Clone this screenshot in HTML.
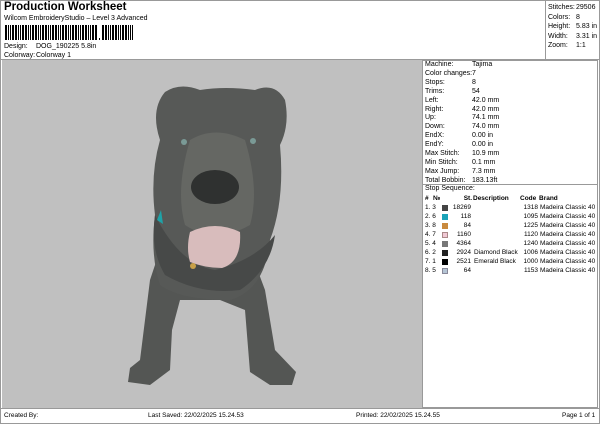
<!DOCTYPE html>
<html><head><style>
*{margin:0;padding:0;box-sizing:border-box}
body{width:600px;height:424px;background:#fff;font-family:"Liberation Sans",sans-serif;font-size:7px;color:#000;position:relative;overflow:hidden}
.a{position:absolute;white-space:nowrap}
.r{position:absolute;left:0;width:176px;height:9px;font-size:6.5px;line-height:9px}
.r span{position:absolute;white-space:nowrap}
.sw{width:6px;height:6px;top:1.5px}
</style></head><body>
<div style="position:absolute;left:0;top:0;width:600px;height:424px;border:1px solid #999"></div>
<div class="a" style="left:4px;top:1px;font-size:11.5px;font-weight:bold">Production Worksheet</div>
<div class="a" style="left:4px;top:15px;font-size:7px">Wilcom EmbroideryStudio – Level 3 Advanced</div>
<div class="a" style="left:5px;top:25px;width:128px;height:15px;background:repeating-linear-gradient(90deg,#000 0 2px,#fff 2px 3px,#000 3px 4px,#fff 4px 5px,#000 5px 6px,#fff 6px 7px,#000 7px 9px,#fff 9px 10px)"></div>
<div class="a" style="left:98px;top:25px;width:4px;height:15px;background:#fff"></div>
<div class="a" style="left:99px;top:38px;width:1px;height:2px;background:#000"></div>
<div class="a" style="left:4px;top:43px">Design:</div><div class="a" style="left:36px;top:43px">DOG_190225 5.8in</div>
<div class="a" style="left:4px;top:52px">Colorway:</div><div class="a" style="left:36px;top:52px">Colorway 1</div>
<div class="a" style="left:545px;top:0;width:1px;height:59px;background:#999"></div>
<div class="a" style="left:548px;top:3px;line-height:9.6px">Stitches:<br>Colors:<br>Height:<br>Width:<br>Zoom:</div>
<div class="a" style="left:576px;top:3px;line-height:9.6px">29506<br>8<br>5.83 in<br>3.31 in<br>1:1</div>
<div class="a" style="left:0;top:59px;width:600px;height:1px;background:#999"></div>
<div class="a" style="left:2px;top:60px;width:420px;height:348px;background:#c0c0c0">
<svg width="420" height="348" viewBox="0 0 420 348">
<g transform="translate(-2,-60)">
<path d="M140 360 L150 280 L160 250 L250 250 L265 290 L275 350 L296 372 L292 385 L270 385 L250 372 L245 310 L220 300 L180 300 L172 330 L170 370 L150 385 L128 382 L130 368 Z" fill="#545654"/>
<path d="M160 140 Q150 110 165 92 Q180 82 200 90 Q225 86 255 90 Q275 82 285 100 Q290 125 280 145 Q285 200 270 240 Q265 290 230 300 Q180 300 160 285 Q150 255 155 215 Q150 175 160 140 Z" fill="#575957"/>
<path d="M190 140 Q215 125 245 140 Q260 190 250 225 Q215 245 185 225 Q175 190 190 140Z" fill="#656763"/>
<path d="M155 215 Q150 250 165 275 Q200 295 240 290 Q270 270 275 235 Q255 260 215 270 Q180 265 155 215Z" fill="#474948"/>
<ellipse cx="215" cy="187" rx="24" ry="17" fill="#2f3130"/>
<circle cx="184" cy="142" r="3" fill="#7a9a96"/><circle cx="253" cy="141" r="3" fill="#7a9a96"/>
<path d="M190 232 Q215 220 240 232 Q242 262 222 268 Q205 268 190 262 Q186 248 190 232Z" fill="#d8bcbc"/>
<path d="M157 220 L161 210 L163 224 Z" fill="#1ea3a8"/>
<circle cx="193" cy="266" r="3" fill="#c9a048"/>
</g></svg></div>
<div class="a" style="left:422px;top:60px;width:176px;height:348px;border:1px solid #999"></div>
<div class="a" style="left:425px;top:61px;line-height:8.9px">Machine:<br>Color changes:<br>Stops:<br>Trims:<br>Left:<br>Right:<br>Up:<br>Down:<br>EndX:<br>EndY:<br>Max Stitch:<br>Min Stitch:<br>Max Jump:<br>Total Bobbin:</div>
<div class="a" style="left:472px;top:61px;line-height:8.9px">Tajima<br>7<br>8<br>54<br>42.0 mm<br>42.0 mm<br>74.1 mm<br>74.0 mm<br>0.00 in<br>0.00 in<br>10.9 mm<br>0.1 mm<br>7.3 mm<br>183.13ft</div>
<div class="a" style="left:423px;top:184px;width:174px;height:1px;background:#999"></div>
<div class="a" style="left:425px;top:185px">Stop Sequence:</div>
<div class="a" style="left:422px;top:194px;width:176px;height:80px">
<div class="r" style="top:0;font-weight:bold;text-decoration:underline"><span style="left:3px">#</span><span style="left:11px">№</span><span style="right:126px">St.</span><span style="left:51px">Description</span><span style="left:98px">Code</span><span style="left:117px">Brand</span></div>
<div class="r" style="top:9px"><span style="left:3px">1. 3</span><span class="sw" style="left:20px;background:#444"></span><span style="right:127px">18269</span><span style="right:60px">1318</span><span style="left:118px">Madeira Classic 40</span></div>
<div class="r" style="top:18px"><span style="left:3px">2. 6</span><span class="sw" style="left:20px;background:#1aa3b8"></span><span style="right:127px">118</span><span style="right:60px">1095</span><span style="left:118px">Madeira Classic 40</span></div>
<div class="r" style="top:27px"><span style="left:3px">3. 8</span><span class="sw" style="left:20px;background:#c98a3e"></span><span style="right:127px">84</span><span style="right:60px">1225</span><span style="left:118px">Madeira Classic 40</span></div>
<div class="r" style="top:36px"><span style="left:3px">4. 7</span><span class="sw" style="left:20px;background:#f0c8d4;border:1px solid #a88"></span><span style="right:127px">1160</span><span style="right:60px">1120</span><span style="left:118px">Madeira Classic 40</span></div>
<div class="r" style="top:45px"><span style="left:3px">5. 4</span><span class="sw" style="left:20px;background:#777"></span><span style="right:127px">4364</span><span style="right:60px">1240</span><span style="left:118px">Madeira Classic 40</span></div>
<div class="r" style="top:54px"><span style="left:3px">6. 2</span><span class="sw" style="left:20px;background:#222"></span><span style="right:127px">2924</span><span style="left:52px">Diamond Black</span><span style="right:60px">1006</span><span style="left:118px">Madeira Classic 40</span></div>
<div class="r" style="top:63px"><span style="left:3px">7. 1</span><span class="sw" style="left:20px;background:#000"></span><span style="right:127px">2521</span><span style="left:52px">Emerald Black</span><span style="right:60px">1000</span><span style="left:118px">Madeira Classic 40</span></div>
<div class="r" style="top:72px"><span style="left:3px">8. 5</span><span class="sw" style="left:20px;background:#b4c4d4;border:1px solid #889"></span><span style="right:127px">64</span><span style="right:60px">1153</span><span style="left:118px">Madeira Classic 40</span></div>
</div>
<div class="a" style="left:0;top:408px;width:600px;height:1px;background:#999"></div>
<div class="a" style="left:4px;top:412px;font-size:6.5px">Created By:</div>
<div class="a" style="left:148px;top:412px;font-size:6.5px">Last Saved: 22/02/2025 15.24.53</div>
<div class="a" style="left:356px;top:412px;font-size:6.5px">Printed: 22/02/2025 15.24.55</div>
<div class="a" style="left:562px;top:412px;font-size:6.5px">Page 1 of 1</div>
</body></html>
